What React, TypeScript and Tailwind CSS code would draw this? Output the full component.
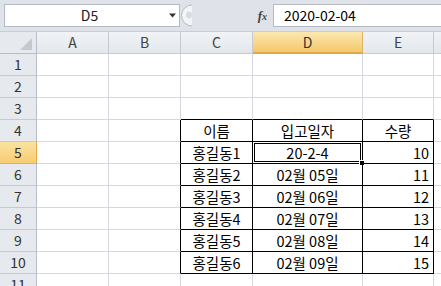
import React from "react";

const font = { fontFamily: '"Noto Sans CJK KR", "Noto Sans", sans-serif' };

const cols = [
  { key: "A", w: "w-[72px]" },
  { key: "B", w: "w-[72px]" },
  { key: "C", w: "w-[72px]" },
  { key: "D", w: "w-[110px]" },
  { key: "E", w: "w-[71px]" },
  { key: "", w: "w-[60px]" },
];

const data: Record<number, [string, string, string]> = {
  4: ["이름", "입고일자", "수량"],
  5: ["홍길동1", "20-2-4", "10"],
  6: ["홍길동2", "02월 05일", "11"],
  7: ["홍길동3", "02월 06일", "12"],
  8: ["홍길동4", "02월 07일", "13"],
  9: ["홍길동5", "02월 08일", "14"],
  10: ["홍길동6", "02월 09일", "15"],
};

function Cell({ row, ci }: { row: number; ci: number }) {
  const inTable = row >= 4 && row <= 10;
  const tableCol = ci >= 2 && ci <= 4;
  const rightBlack = inTable && ci >= 1 && ci <= 4;
  const bottomBlack = tableCol && row >= 3 && row <= 10;
  const value = inTable && tableCol ? data[row][ci - 2] : "";
  const align =
    ci === 4 && row > 4 ? "justify-end pr-[4px]" : "justify-center";

  return (
    <div
      className={`relative flex h-full shrink-0 items-end pb-[1px] ${cols[ci].w} ${align} border-r border-b ${
        rightBlack ? "border-r-black" : "border-r-[#d4d9e1]"
      } ${bottomBlack ? "border-b-black" : "border-b-[#d4d9e1]"}`}
    >
      <span className="text-[14.5px] leading-[18px] text-black">{value}</span>
      {row === 5 && ci === 3 && (
        <>
          <div className="absolute -left-[1px] -top-[1px] bottom-[-1px] right-[-1px] border-[3px] border-double border-black" />
          <div className="absolute -bottom-[3px] -right-[3px] h-[6px] w-[6px] border border-white bg-black" />
        </>
      )}
    </div>
  );
}

export default function App() {
  const rows = Array.from({ length: 11 }, (_, i) => i + 1);
  return (
    <div className="h-[286px] w-[441px] overflow-hidden bg-white" style={font}>
      {/* name box + formula bar */}
      <div className="flex h-[31px] bg-[#dfe3e9] pt-[4px]">
        <div className="ml-[4px] flex h-[23px] w-[176px] items-center border border-[#b4bac2] bg-white">
          <span className="flex-1 pl-[6px] text-center text-[14px] text-[#222]">D5</span>
          <svg width="9" height="5" viewBox="0 0 9 5" className="mr-[2px]">
            <path d="M1 0.5 L8 0.5 L4.5 4.5 Z" fill="#333" />
          </svg>
        </div>
        <div className="-ml-[2px] flex h-[23px] w-[19px] items-center">
          <svg width="19" height="23" viewBox="0 0 19 23">
            <path d="M14 1 A10 10 0 0 0 14 22" fill="#f3f4f6" stroke="#b6bcc4" />
            <ellipse cx="11" cy="11" rx="3" ry="3.5" fill="#d8dce1" />
          </svg>
        </div>
        <div className="flex h-[23px] flex-1 items-center justify-end pr-[6px]">
          <span
            className="text-[13px] font-bold italic text-[#444]"
            style={{ fontFamily: '"Liberation Serif", serif' }}
          >
            f<span className="text-[10px]">x</span>
          </span>
        </div>
        <div className="flex h-[23px] w-[168px] items-center border-y border-l border-[#b4bac2] bg-white pl-[10px]">
          <span className="text-[14px] text-black">2020-02-04</span>
        </div>
      </div>

      {/* column headers */}
      <div className="flex h-[23px] border-t border-[#c9ced6]">
        <div className="relative h-full w-[37px] shrink-0 border-r border-b border-[#b8bec7] bg-[#e6e9ee]">
          <svg width="14" height="14" viewBox="0 0 14 14" className="absolute bottom-[2px] right-[3px]">
            <path d="M13 1 L13 13 L1 13 Z" fill="#c4c9d0" />
          </svg>
        </div>
        {cols.map((c, i) =>
          c.key === "D" ? (
            <div
              key={i}
              className={`flex h-full shrink-0 items-center justify-center border-r border-b-2 border-r-[#d9b46a] border-b-[#e2a845] bg-gradient-to-b from-[#fbe8b0] to-[#f4c868] ${c.w}`}
            >
              <span className="text-[14px] text-[#333]">{c.key}</span>
            </div>
          ) : (
            <div
              key={i}
              className={`flex h-full shrink-0 items-center justify-center border-r border-b border-[#c5cad2] bg-gradient-to-b from-[#f1f3f6] to-[#e3e7ec] ${c.w}`}
            >
              <span className="text-[14px] text-[#444]">{c.key}</span>
            </div>
          )
        )}
      </div>

      {/* rows */}
      {rows.map((r) => (
        <div key={r} className="flex h-[22px]">
          <div
            className={`flex h-full w-[37px] shrink-0 items-center justify-center border-b border-r ${
              r === 5
                ? "border-r-[#e2a845] border-b-[#d9b46a] bg-gradient-to-b from-[#fbe2a0] to-[#f6cd72]"
                : "border-r-[#b8bec7] border-b-[#c5cad2] bg-[#e6e9ee]"
            }`}
          >
            <span className="text-[14px] text-[#333]">{r}</span>
          </div>
          {cols.map((_, ci) => (
            <Cell key={ci} row={r} ci={ci} />
          ))}
        </div>
      ))}
    </div>
  );
}
